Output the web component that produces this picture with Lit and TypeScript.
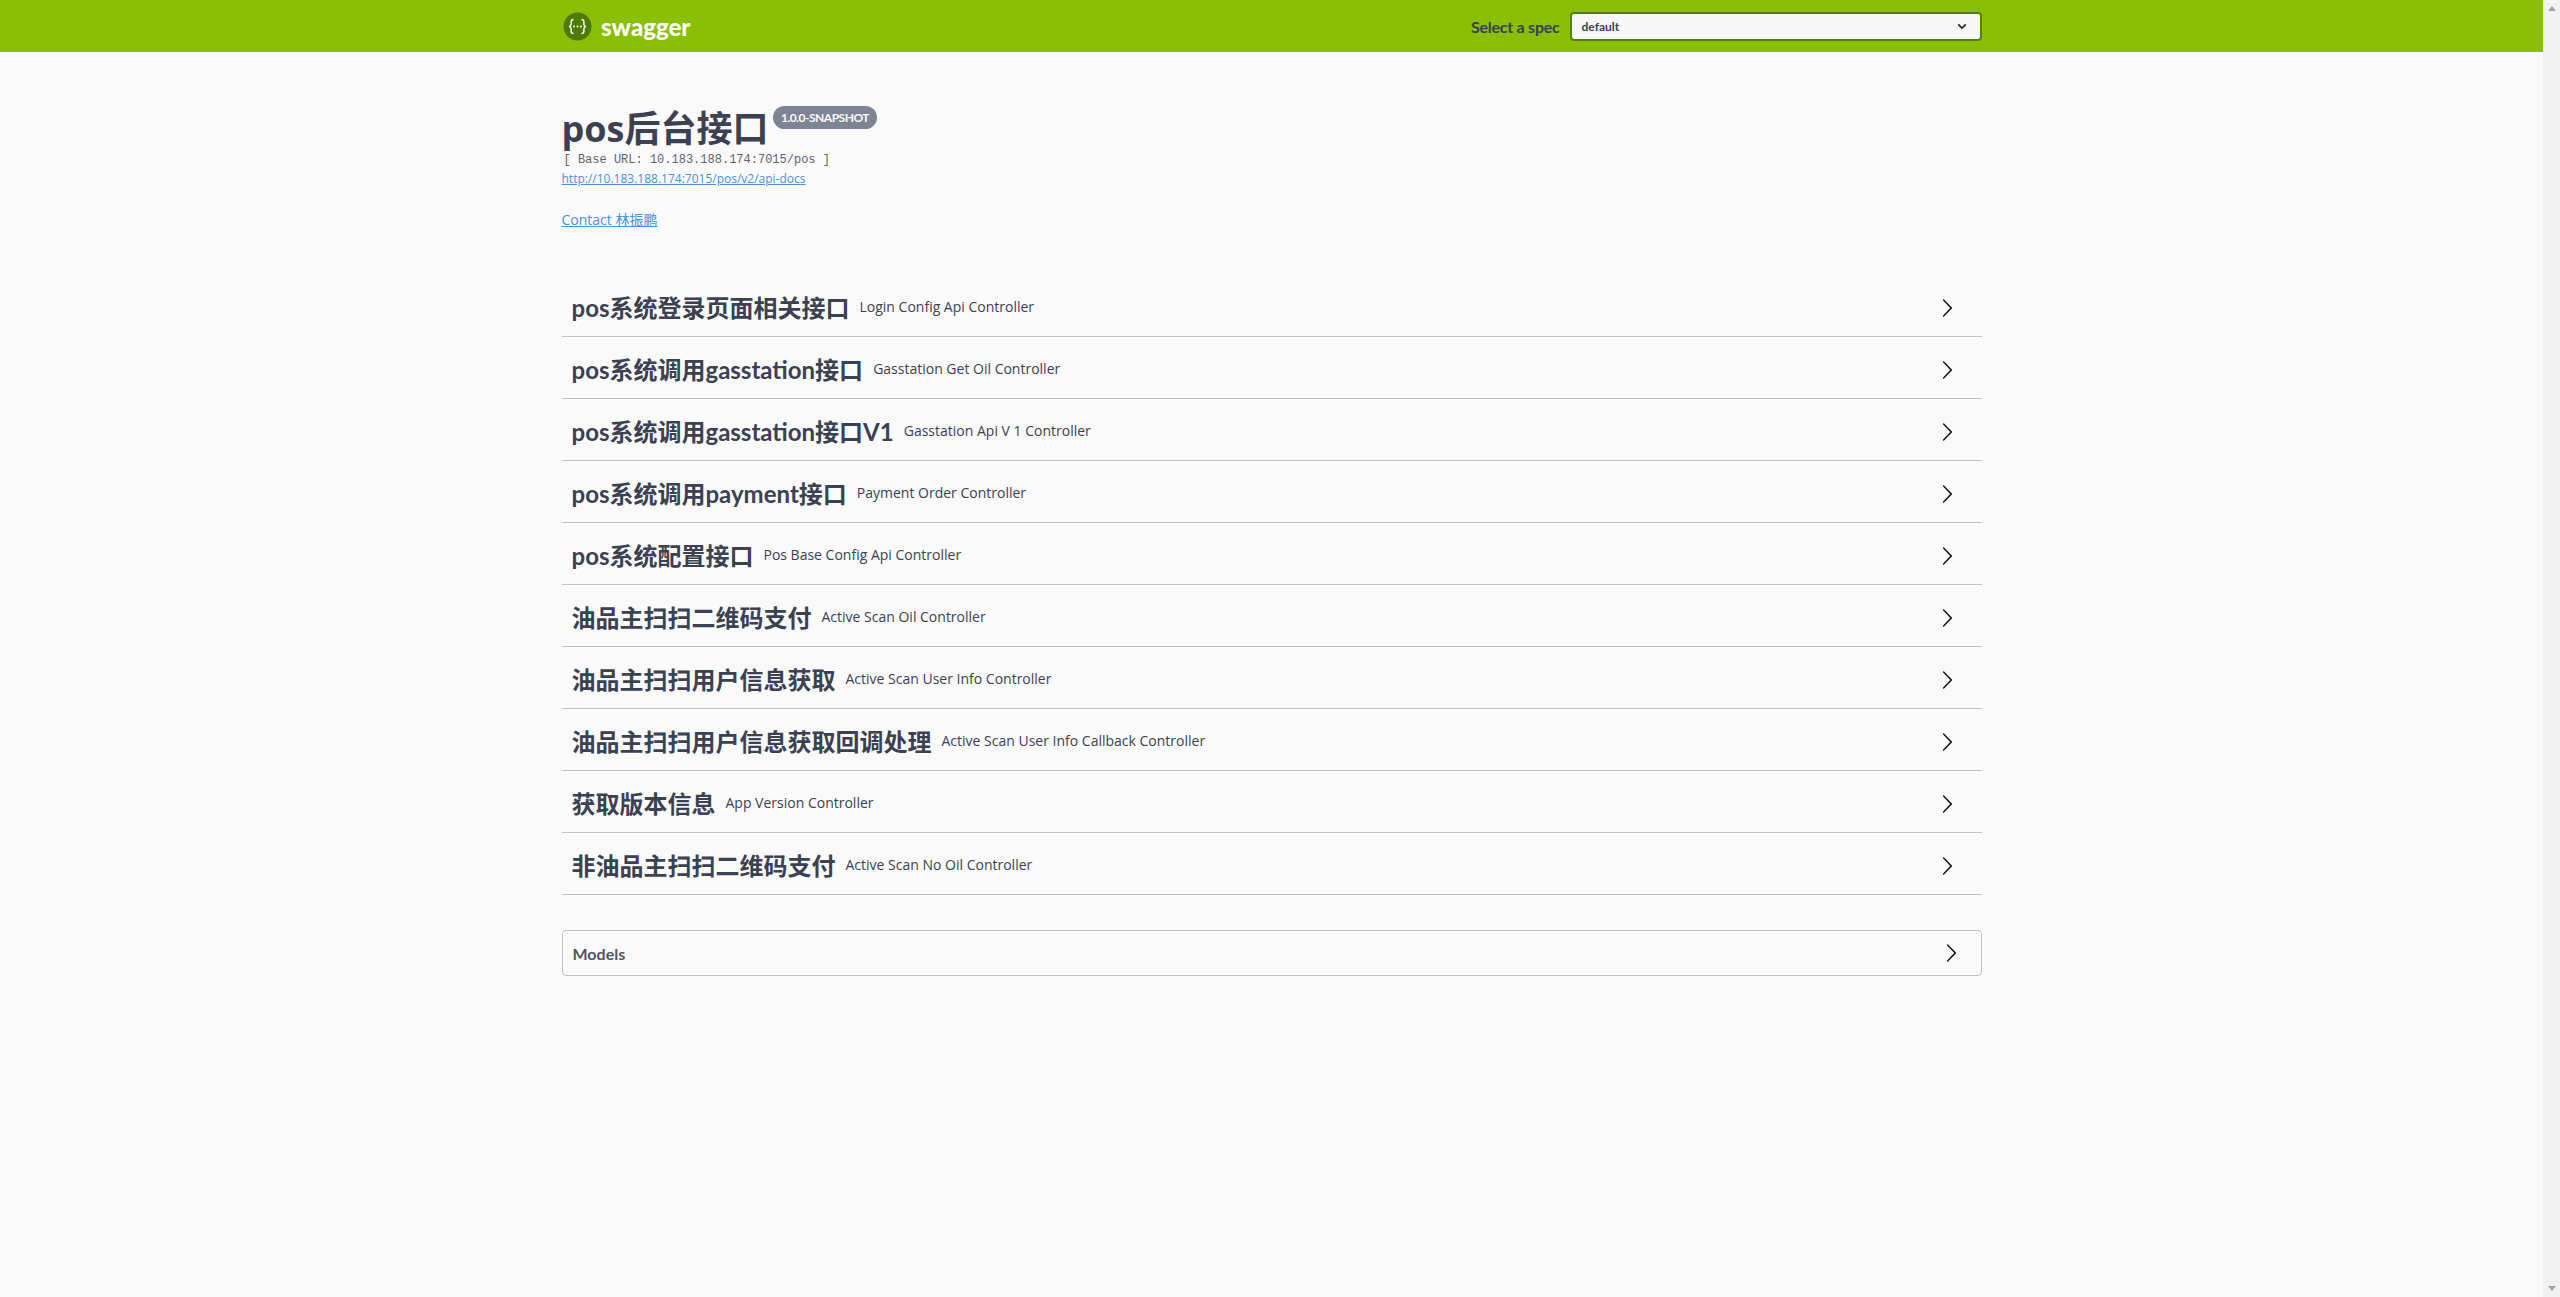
import { LitElement, html, css } from "lit";
import { customElement } from "lit/decorators.js";

const TAGS: [string, string][] = [
  ["pos系统登录页面相关接口", "Login Config Api Controller"],
  ["pos系统调用gasstation接口", "Gasstation Get Oil Controller"],
  ["pos系统调用gasstation接口V1", "Gasstation Api V 1 Controller"],
  ["pos系统调用payment接口", "Payment Order Controller"],
  ["pos系统配置接口", "Pos Base Config Api Controller"],
  ["油品主扫扫二维码支付", "Active Scan Oil Controller"],
  ["油品主扫扫用户信息获取", "Active Scan User Info Controller"],
  ["油品主扫扫用户信息获取回调处理", "Active Scan User Info Callback Controller"],
  ["获取版本信息", "App Version Controller"],
  ["非油品主扫扫二维码支付", "Active Scan No Oil Controller"],
];

const chevron = html`<svg class="chev" viewBox="0 0 20 20" width="20" height="20"><path d="M13.25 10L6.109 2.58a.697.697 0 0 1 0-.979.68.68 0 0 1 .969 0l7.83 7.908a.697.697 0 0 1 0 .979l-7.83 7.908a.68.68 0 0 1-.969 0 .697.697 0 0 1 0-.979L13.25 10z"/></svg>`;

@customElement("app-root")
export class AppRoot extends LitElement {
  static styles = css`
    :host { display: flex; height: 1297px; overflow: hidden; background: #fafafa; color: #3b4151;
      font-family: "Open Sans", "Noto Sans CJK SC", sans-serif; }
    .page { flex: 1; min-width: 0; }
    .scrollbar { width: 17px; flex: none; background: #f1f1f1; display: flex; flex-direction: column; justify-content: space-between; }
    .arrow { height: 17px; display: flex; align-items: center; justify-content: center; }
    .topbar { height: 52px; background: #89bf04; }
    .wrap { width: 1420px; margin: 0 auto; }
    .topbar .wrap { height: 52px; display: flex; align-items: center; justify-content: space-between; }
    .logo { display: flex; align-items: center; gap: 9px; margin-left: 1.5px; }
    .logo-text { font: 900 24px Lato, sans-serif; color: #fff; }
    .spec { display: flex; align-items: center; gap: 10px; }
    .spec label { font: 700 16px Lato, sans-serif; letter-spacing: -0.25px; color: #3b4151; }
    .select { box-sizing: border-box; width: 412px; height: 29px; border: 2px solid #547f00; border-radius: 4px; background: #f7f7f7;
      display: flex; align-items: center; justify-content: space-between; padding: 0 13px 0 10px; font: 700 12px Lato, sans-serif; }
    .info { padding-top: 50px; height: 223px; box-sizing: border-box; }
    .title-row { display: flex; align-items: flex-start; height: 49px; }
    h1 { margin: 5px 0 0; font: 700 36px/44px "Open Sans", "Noto Sans CJK SC", sans-serif; }
    .badge { margin: 4px 0 0 5px; height: 23px; padding: 0 7.5px; border-radius: 12px; background: #7d8492; color: #fafafa;
      font: 700 12px/23px Lato, sans-serif; letter-spacing: -0.5px; }
    .base { font: 12px/14px "Liberation Mono", monospace; color: #5d6270; margin: 2px 0 0 2px; height: 14px; }
    a { color: #4990e2; text-decoration: underline; font-family: "Open Sans", "Noto Sans CJK SC", sans-serif; }
    .url { display: block; font-size: 12px; line-height: 17px; margin-top: 3px; }
    .contact { display: block; font-size: 14px; line-height: 20px; margin-top: 23px; }
    .tag { box-sizing: border-box; height: 62px; border-bottom: 1px solid rgba(59,65,81,.3); display: flex; align-items: center; padding: 4px 25px 0 10px; }
    .tag b { font: 700 24px/30px Lato, "Noto Sans CJK SC", sans-serif; }
    .tag small { font-size: 14px; margin-left: 10px; flex: 1; line-height: 20px; position: relative; top: -1px; }
    .chev { display: block; fill: #111; }
    .models { box-sizing: border-box; height: 46px; margin-top: 35px; border: 1px solid rgba(59,65,81,.3); border-radius: 4px;
      display: flex; align-items: center; justify-content: space-between; padding: 0 20px 0 10px; font: 700 16px Lato, sans-serif; color: #505662; }
  `;

  render() {
    return html`
      <div class="page">
        <div class="topbar"><div class="wrap">
          <div class="logo">
            <svg width="29" height="29" viewBox="0 0 29 29">
              <circle cx="14.5" cy="14.5" r="14" fill="#4e7a02" />
              <path d="M10.5 7.5c-2.2 0-2.4 1-2.4 2.6v2.2c0 1.2-.6 2-2 2.2 1.4.2 2 1 2 2.2v2.2c0 1.6.2 2.6 2.4 2.6M18.5 7.5c2.2 0 2.4 1 2.4 2.6v2.2c0 1.2.6 2 2 2.2-1.4.2-2 1-2 2.2v2.2c0 1.6-.2 2.6-2.4 2.6" fill="none" stroke="#fff" stroke-width="1.4"/>
              <circle cx="11" cy="14.5" r="1" fill="#fff"/><circle cx="14.5" cy="14.5" r="1" fill="#fff"/><circle cx="18" cy="14.5" r="1" fill="#fff"/>
            </svg>
            <span class="logo-text">swagger</span>
          </div>
          <div class="spec">
            <label>Select a spec</label>
            <div class="select"><span>default</span>
              <svg width="10" height="7" viewBox="0 0 12 8"><path d="M1.5 1.5L6 6l4.5-4.5" fill="none" stroke="#222" stroke-width="2"/></svg>
            </div>
          </div>
        </div></div>
        <div class="wrap">
          <div class="info">
            <div class="title-row"><h1>pos后台接口</h1><span class="badge">1.0.0-SNAPSHOT</span></div>
            <div class="base">[ Base URL: 10.183.188.174:7015/pos ]</div>
            <a class="url" href="#">http://10.183.188.174:7015/pos/v2/api-docs</a>
            <a class="contact" href="#">Contact 林振鹏</a>
          </div>
          <div class="tags">
            ${TAGS.map(([t, d]) => html`<div class="tag"><b>${t}</b><small>${d}</small>${chevron}</div>`)}
          </div>
          <div class="models"><span>Models</span>${chevron}</div>
        </div>
      </div>
      <div class="scrollbar">
        <div class="arrow"><svg width="8" height="5" viewBox="0 0 8 5"><path d="M4 0L8 5H0z" fill="#a3a3a3"/></svg></div>
        <div class="arrow"><svg width="8" height="5" viewBox="0 0 8 5"><path d="M4 5L8 0H0z" fill="#a3a3a3"/></svg></div>
      </div>
    `;
  }
}
